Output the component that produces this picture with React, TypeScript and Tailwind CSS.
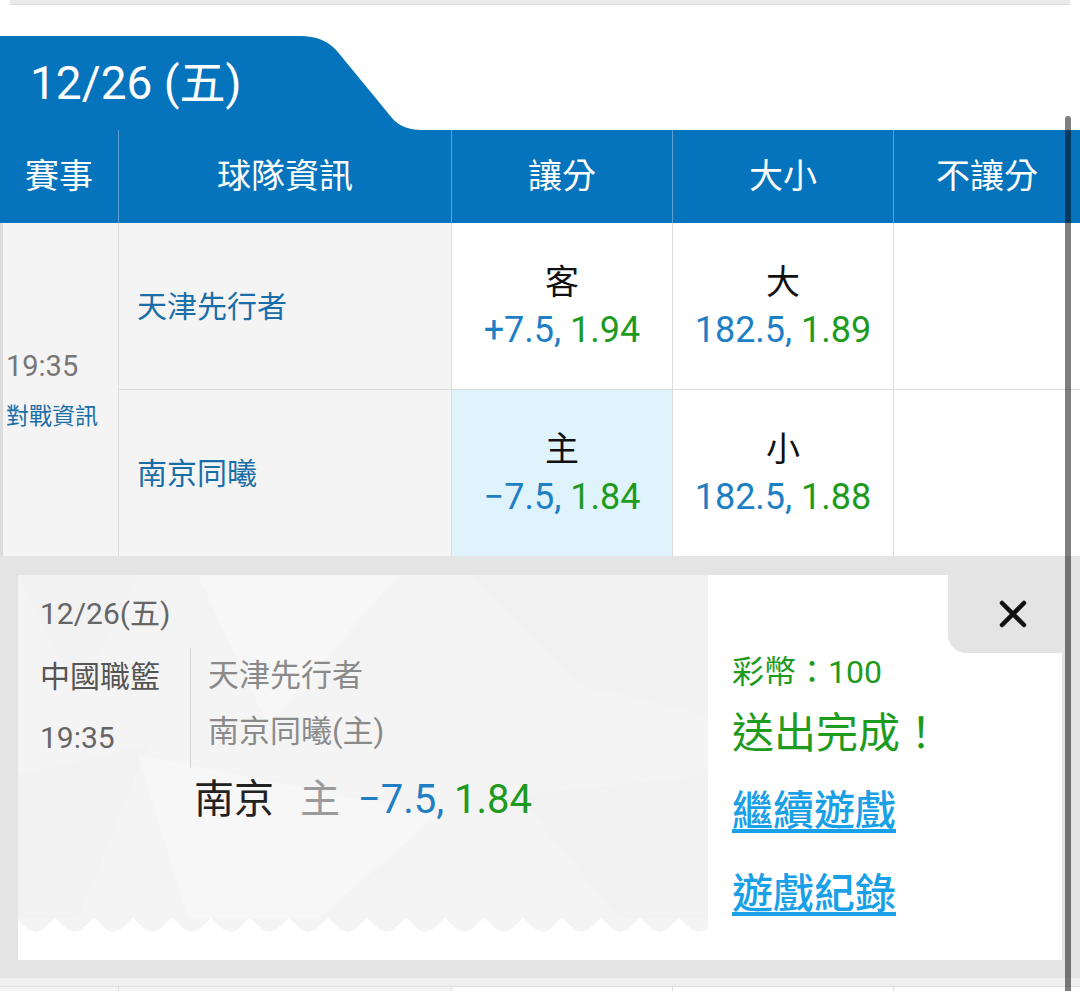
import React from "react";

const COLS = "grid grid-cols-[119px_333px_221px_221px_1fr]";

// zigzag bottom of the ticket stub
const zig = (() => {
    let d = "M0 0 L0 3";
    for (let k = -1; k < 18; k++) {
        const p = 37 + 39 * k;
        d += ` L${p + 12} 11 Q${p + 19.5} 17 ${p + 27} 11 L${p + 39} 0`;
    }
    return d + " L690 0 Z";
})();

const Odds = ({ label, line, price }: { label: string; line: string; price: string }) => (
    <div className="flex flex-col items-center justify-center">
        <span className="text-[34px] leading-[48px] text-[#111]">{label}</span>
        <span className="text-[36px] leading-[48px]">
            <span className="text-[#1f7fc4]">{line}, </span>
            <span className="text-[#1e9b1e]">{price}</span>
        </span>
    </div>
);

export default function App() {
    return (
        <div className="relative h-[991px] w-[1080px] overflow-hidden bg-white font-['Roboto','Noto_Sans_CJK_TC',sans-serif]">
            {/* search box edge */}
            <div className="mx-[10px] h-[5px] border-b border-[#d9d9d9] bg-[#eaeaea]" />

            {/* date tab */}
            <div className="relative mt-[31px] h-[94px] w-[430px]">
                <svg className="absolute inset-0" width="430" height="94" viewBox="0 0 430 94">
                    <path d="M0 0 H300 Q324 0 337 15 L392 82 Q402 94 422 94 H0 Z" fill="#0574bc" />
                </svg>
                <div className="relative pl-[30px] pt-[19px] text-[46px] leading-[56px] text-white">12/26 (五)</div>
            </div>

            {/* header */}
            <div className={`${COLS} h-[93px] bg-[#0574bc] text-[34px] text-white`}>
                {["賽事", "球隊資訊", "讓分", "大小", "不讓分"].map((h, i) => (
                    <div key={h} className={`flex items-center justify-center ${i < 4 ? "border-r border-[#5b9fd4]" : ""}`}>
                        {h}
                    </div>
                ))}
            </div>

            {/* match rows */}
            <div className={`${COLS} grid-rows-[167px_166px]`}>
                <div className="row-span-2 flex flex-col justify-center border-l-[3px] border-r border-[#dcdcdc] bg-[#f4f4f4] pl-[3px]">
                    <span className="text-[29px] leading-[36px] text-[#777]">19:35</span>
                    <span className="mt-[18px] text-[23px] leading-[30px] text-[#1a6ea8]">對戰資訊</span>
                </div>
                <div className="flex items-center border-b border-r border-[#dcdcdc] bg-[#f4f4f4] pl-[18px] text-[30px] text-[#1a6ea8]">天津先行者</div>
                <div className="flex items-center justify-center border-b border-r border-[#dcdcdc] bg-white">
                    <Odds label="客" line="+7.5" price="1.94" />
                </div>
                <div className="flex items-center justify-center border-b border-r border-[#dcdcdc] bg-white">
                    <Odds label="大" line="182.5" price="1.89" />
                </div>
                <div className="border-b border-[#dcdcdc] bg-white" />

                <div className="flex items-center border-r border-[#dcdcdc] bg-[#f4f4f4] pl-[18px] text-[30px] text-[#1a6ea8]">南京同曦</div>
                <div className="flex items-center justify-center border-r border-[#dcdcdc] bg-[#def3fb]">
                    <Odds label="主" line="−7.5" price="1.84" />
                </div>
                <div className="flex items-center justify-center border-r border-[#dcdcdc] bg-white">
                    <Odds label="小" line="182.5" price="1.88" />
                </div>
                <div className="bg-white" />
            </div>

            {/* bet confirmation */}
            <div className="bg-[#e4e4e4] pb-[18px] pl-[18px] pr-[18px] pt-[19px]">
                <div className="flex h-[385px] bg-white">
                    <div className="flex w-[690px] flex-col">
                        <div className="relative flex-1 overflow-hidden bg-[#f4f4f4] px-[22px] pt-[19px]">
                            <svg className="absolute inset-0" width="690" height="343" viewBox="0 0 690 343">
                                <polygon points="0,0 120,0 60,120" fill="#f2f2f2" />
                                <polygon points="180,0 380,0 250,150" fill="#f7f7f7" />
                                <polygon points="450,0 690,0 690,140 560,110" fill="#f2f2f2" />
                                <polygon points="0,200 130,170 60,343 0,343" fill="#f2f2f2" />
                                <polygon points="120,180 420,240 300,343 170,343" fill="#f7f7f7" />
                                <polygon points="500,220 690,200 690,343 600,343" fill="#f2f2f2" />
                            </svg>
                            <div className="relative">
                                <div className="text-[30px] leading-[40px] text-[#666]">12/26(五)</div>
                                <div className="mt-[12px] flex">
                                    <div className="w-[150px] text-[30px] leading-[61px] text-[#555]">
                                        <div>中國職籃</div>
                                        <div className="text-[#666]">19:35</div>
                                    </div>
                                    <div className="mt-[2px] border-l border-[#d4d4d4] pl-[17px] text-[31px] leading-[56px] text-[#8a8a8a]">
                                        <div>天津先行者</div>
                                        <div>南京同曦(主)</div>
                                    </div>
                                </div>
                                <div className="mt-[7px] flex justify-center text-[40px] leading-[50px]">
                                    <span className="mr-[26px] text-[#222]">南京</span>
                                    <span className="mr-[18px] text-[#9a9a9a]">主</span>
                                    <span className="text-[#1f7fc4]">−7.5,&nbsp;</span>
                                    <span className="text-[#1e9b1e]">1.84</span>
                                </div>
                            </div>
                        </div>
                        <svg width="690" height="15" viewBox="0 0 690 15" className="block">
                            <path d={zig} fill="#f4f4f4" />
                        </svg>
                        <div className="h-[27px]" />
                    </div>

                    <div className="relative flex-1 pl-[24px] pt-[76px]">
                        <button className="absolute right-0 top-0 flex h-[78px] w-[114px] items-center justify-end rounded-bl-[18px] bg-[#e4e4e4] pr-[35px]">
                            <svg width="28" height="28" viewBox="0 0 28 28">
                                <path d="M3 3 L25 25 M25 3 L3 25" stroke="#111" strokeWidth="4.5" strokeLinecap="round" />
                            </svg>
                        </button>
                        <div className="text-[32px] leading-[42px] text-[#1e9b1e]">彩幣：100</div>
                        <div className="mt-[13px] text-[42px] leading-[56px] text-[#1e9b1e]">送出完成！</div>
                        <a className="mt-[21px] block w-fit text-[41px] font-medium leading-[56px] text-[#19a0e6] underline underline-offset-4">繼續遊戲</a>
                        <a className="mt-[27px] block w-fit text-[41px] font-medium leading-[56px] text-[#19a0e6] underline underline-offset-4">遊戲紀錄</a>
                    </div>
                </div>
            </div>
            <div className="h-[9px] border-b border-[#dcdcdc] bg-[#efefef]" />

            {/* next row (cut off) */}
            <div className={`${COLS} h-[60px]`}>
                <div className="border-r border-[#dcdcdc] bg-[#f4f4f4]" />
                <div className="border-r border-[#dcdcdc] bg-[#f4f4f4]" />
                <div className="border-r border-[#dcdcdc] bg-white" />
                <div className="border-r border-[#dcdcdc] bg-white" />
                <div className="bg-white" />
            </div>

            {/* scroll indicator */}
            <div className="absolute left-[1065px] top-[116px] h-[900px] w-[6px] rounded-full bg-black/50" />
        </div>
    );
}
